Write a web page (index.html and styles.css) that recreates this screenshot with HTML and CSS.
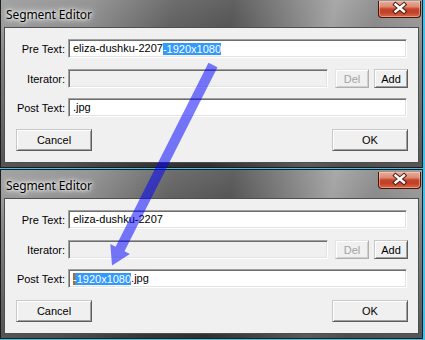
FILE: index.html
```html
<!DOCTYPE html>
<html>
<head>
<meta charset="utf-8">
<link rel="stylesheet" href="styles.css">
</head>
<body>
<div class="screen">
  <div class="window win-top">
    <div class="titlebar">
      <span class="title">Segment Editor</span>
      <div class="close">
        <svg width="43" height="17" viewBox="0 0 43 17">
          <path d="M17.5 4.5 L26 11.5 M26 4.5 L17.5 11.5" stroke="#4a1a10" stroke-width="4.4" stroke-linecap="square" fill="none"/>
          <path d="M17.5 4.5 L26 11.5 M26 4.5 L17.5 11.5" stroke="#ffffff" stroke-width="2.4" stroke-linecap="square" fill="none"/>
        </svg>
      </div>
    </div>
    <div class="client">
      <div class="row r1"><span class="lbl">Pre Text:</span><div class="field">eliza-dushku-2207<span class="sel">-1920x1080</span></div></div>
      <div class="row r2"><span class="lbl">Iterator:</span><div class="field disabled"></div><div class="btn small dis">Del</div><div class="btn small add">Add</div></div>
      <div class="row r3"><span class="lbl">Post Text:</span><div class="field">.jpg</div></div>
      <div class="buttons"><div class="btn wide">Cancel</div><div class="btn wide">OK</div></div>
    </div>
  </div>
  <div class="window">
    <div class="titlebar">
      <span class="title">Segment Editor</span>
      <div class="close">
        <svg width="43" height="17" viewBox="0 0 43 17">
          <path d="M17.5 4.5 L26 11.5 M26 4.5 L17.5 11.5" stroke="#4a1a10" stroke-width="4.4" stroke-linecap="square" fill="none"/>
          <path d="M17.5 4.5 L26 11.5 M26 4.5 L17.5 11.5" stroke="#ffffff" stroke-width="2.4" stroke-linecap="square" fill="none"/>
        </svg>
      </div>
    </div>
    <div class="client">
      <div class="row r1"><span class="lbl">Pre Text:</span><div class="field">eliza-dushku-2207</div></div>
      <div class="row r2"><span class="lbl">Iterator:</span><div class="field disabled"></div><div class="btn small dis">Del</div><div class="btn small add">Add</div></div>
      <div class="row r3"><span class="lbl">Post Text:</span><div class="field"><span class="sel caret">-1920x1080</span>.jpg</div></div>
      <div class="buttons"><div class="btn wide">Cancel</div><div class="btn wide">OK</div></div>
    </div>
  </div>
  <svg class="arrow" width="425" height="340" viewBox="0 0 425 340">
    <polygon points="217.5,67.3 124.5,251.2 129.9,254 112,265.5 110.3,244.1 115.6,246.8 208.5,62.7" fill="#0000ff" fill-opacity="0.52"/>
  </svg>
</div>
</body>
</html>
```
FILE: styles.css
```css
* { box-sizing: border-box; }
html, body { margin: 0; padding: 0; }
body {
  width: 425px;
  height: 340px;
  overflow: hidden;
  font-family: "Liberation Sans", Arial, sans-serif;
  font-size: 11px;
  color: #000;
}
.screen {
  position: relative;
  width: 425px;
  height: 340px;
  overflow: hidden;
  background: #38c6ee;
  display: flex;
  flex-direction: column;
  gap: 1px;
}
.window {
  position: relative;
  flex: none;
  width: 423px;
  height: 170px;
  border: 1px solid #1c1c1c;
  padding: 0 3px 4px 3px;
  display: flex;
  flex-direction: column;
  background:
    linear-gradient(to bottom, rgba(255,255,255,0.08) 0, rgba(0,0,0,0) 28px, rgba(0,0,0,0.15) 60px, rgba(0,0,0,0.45) 100%),
    linear-gradient(100deg, #9c9c9c 0, #8e8e8e 90px, #626262 170px, #555555 230px, #7a7a7a 280px, #a2a2a2 330px, #8a8a8a 372px, #9a9a9a 425px);
}
.win-top { margin-top: -2px; }
.titlebar {
  height: 28px;
  margin: 0 -3px;
  padding: 2px 0 0 5px;
  display: flex;
  align-items: center;
}
.title {
  font-family: "Noto Sans", "Open Sans", sans-serif;
  font-size: 12px;
  color: #000;
  text-shadow: 0 0 8px #fff, 0 0 5px #fff, 0 0 3px rgba(255,255,255,0.9);
  letter-spacing: -0.1px;
}
.close {
  position: absolute;
  top: 2px;
  right: 1px;
  width: 43px;
  height: 17px;
  border: 1px solid #4a1208;
  border-top: none;
  border-radius: 0 0 4px 4px;
  background: linear-gradient(to bottom, #e9ae9c 0, #dc8a74 35%, #c5452a 50%, #c24025 70%, #d7684a 100%);
  box-shadow: inset 0 0 0 1px rgba(255,220,200,0.45);
}
.close svg { display: block; position: absolute; top: -1px; left: -1px; }
.client {
  flex: none;
  height: 136px;
  border: 1px solid #4f4f4f;
  background: #f0f0f0;
  padding: 0 11px 0 0;
  display: flex;
  flex-direction: column;
}
.row {
  display: flex;
  align-items: center;
  height: 19px;
}
.r1 { margin-top: 11px; }
.r2 { margin-top: 11px; }
.r3 { margin-top: 10px; }
.lbl {
  width: 60px;
  text-align: right;
  margin-right: 3px;
  white-space: nowrap;
}
.field {
  flex: 1;
  height: 19px;
  background: #fff;
  border: 1px solid;
  border-color: #a0a0a0 #ffffff #ffffff #a0a0a0;
  box-shadow: inset 1px 1px 0 #6e6e6e, inset -1px -1px 0 #e3e3e3;
  padding: 0 4px;
  line-height: 17px;
  white-space: nowrap;
  overflow: hidden;
}
.field.disabled { background: #f0f0f0; }
.sel {
  display: inline-block;
  background: #3399ff;
  color: #fff;
  line-height: 12px;
  height: 12px;
  vertical-align: -1px;
}
.caret { box-shadow: inset 2px 0 0 #c06418; }
.btn {
  height: 19px;
  display: flex;
  align-items: center;
  justify-content: center;
  background: #f0f0f0;
  border: 1px solid;
  border-color: #c8c8c8 #5e5e5e #5e5e5e #c8c8c8;
  box-shadow: inset 1px 1px 0 #ffffff, inset -1px -1px 0 #a0a0a0;
}
.small { width: 34px; flex: none; }
.dis {
  margin-left: 7px;
  color: #a3a3a3;
  border-color: #e4e4e4 #b0b0b0 #b0b0b0 #e4e4e4;
  box-shadow: inset 1px 1px 0 #ffffff, inset -1px -1px 0 #cfcfcf;
}
.add { margin-left: 5px; margin-right: -1px; }
.buttons {
  margin-top: 12px;
  padding-left: 11px;
  margin-right: -1px;
  display: flex;
  justify-content: space-between;
}
.wide { width: 76px; height: 22px; padding-bottom: 1px; }
.arrow {
  position: absolute;
  left: 0;
  top: 0;
  pointer-events: none;
}
```
